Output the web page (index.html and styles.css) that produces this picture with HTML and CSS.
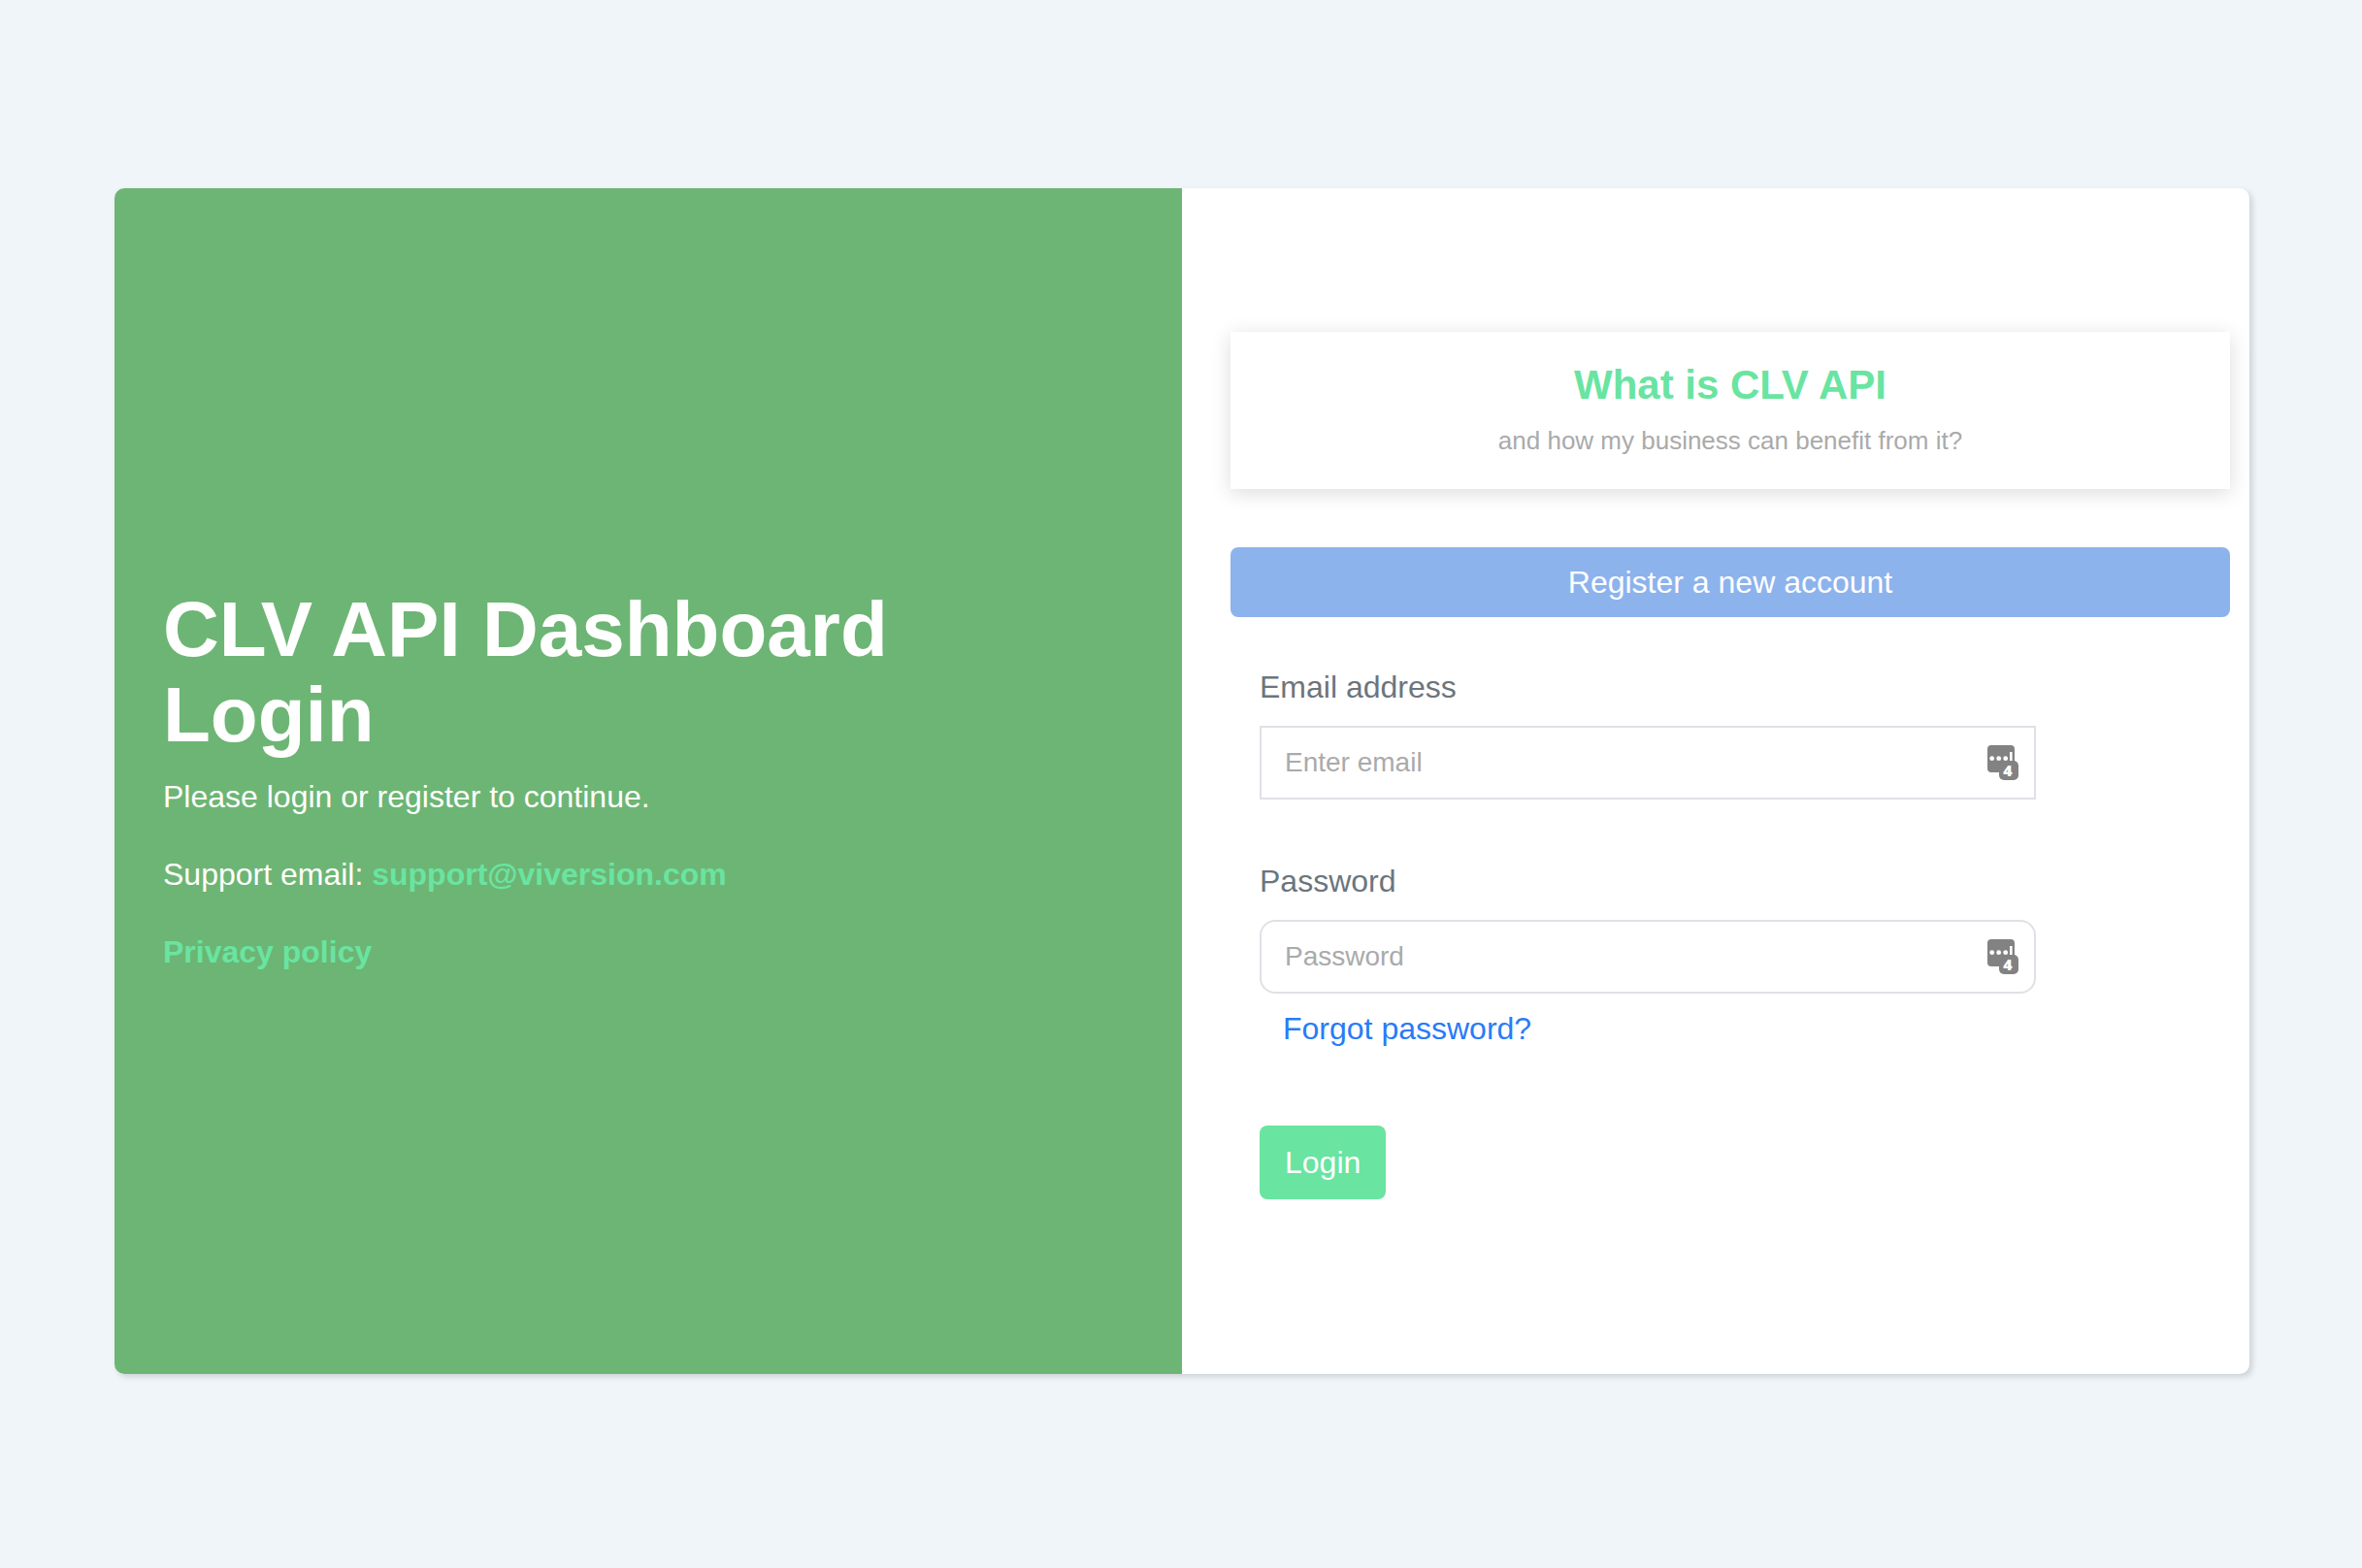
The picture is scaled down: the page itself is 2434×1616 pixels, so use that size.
FILE: index.html
```html
<!DOCTYPE html>
<html lang="en">
<head>
    <meta charset="UTF-8">
    <meta name="viewport" content="width=device-width, initial-scale=1">
    <title>CLV API Dashboard Login</title>
    <link rel="stylesheet" href="styles.css">
</head>
<body>
<div class="card">
    <div class="intro">
        <h1>CLV API Dashboard Login</h1>
        <p>Please login or register to continue.</p>
        <p>Support email: <a href="mailto:support@viversion.com">support@viversion.com</a></p>
        <p><a href="#">Privacy policy</a></p>
    </div>
    <div class="panel">
        <a class="about" href="#">
            <h2>What is CLV API</h2>
            <span>and how my business can benefit from it?</span>
        </a>
        <button class="register" type="button">Register a new account</button>
        <form class="loginForm">
            <label for="email">Email address</label>
            <div class="field">
                <input type="email" id="email" class="square" placeholder="Enter email">
                <svg class="keyIcon" viewBox="0 0 32 36">
                    <rect width="28" height="28" rx="4"/>
                    <rect x="12" y="16" width="20" height="20" rx="5"/>
                    <g class="light">
                        <circle cx="4.7" cy="13.7" r="2.4"/>
                        <circle cx="11.7" cy="13.7" r="2.4"/>
                        <circle cx="18.7" cy="13.7" r="2.4"/>
                        <rect x="23" y="7" width="2.6" height="9"/>
                        <text x="21" y="32" text-anchor="middle">4</text>
                    </g>
                </svg>
            </div>
            <label for="password">Password</label>
            <div class="field">
                <input type="password" id="password" placeholder="Password">
                <svg class="keyIcon" viewBox="0 0 32 36">
                    <rect width="28" height="28" rx="4"/>
                    <rect x="12" y="16" width="20" height="20" rx="5"/>
                    <g class="light">
                        <circle cx="4.7" cy="13.7" r="2.4"/>
                        <circle cx="11.7" cy="13.7" r="2.4"/>
                        <circle cx="18.7" cy="13.7" r="2.4"/>
                        <rect x="23" y="7" width="2.6" height="9"/>
                        <text x="21" y="32" text-anchor="middle">4</text>
                    </g>
                </svg>
            </div>
            <a class="forgot" href="#">Forgot password?</a>
            <button class="login" type="submit">Login</button>
        </form>
    </div>
</div>
</body>
</html>
```
FILE: styles.css
```css
*{
    box-sizing: border-box;
}
body{
    margin:0;
    padding:194px 116px 200px 118px;
    background: #eff5f9;
    font:32px/48px "Helvetica Neue", "Liberation Sans", Arial, sans-serif;
}
h1, h2, p{
    margin:0;
}
a{
    text-decoration: none;
}
button, input{
    font-family: inherit;
}
.card{
    display: grid;
    grid-template-columns: 1fr 1fr;
    min-height: calc(100vh - 394px);
    background: #fff;
    border-radius: 10px;
    box-shadow: 3px 3px 6px rgba(0,0,0,.15);
}
.intro, .panel{
    display: flex;
    flex-direction: column;
    justify-content: center;
}

/* left side */
.intro{
    gap: 32px;
    padding:0 50px;
    background: #6db574;
    border-radius: 10px 0 0 10px;
    color: #fff;
}
.intro h1{
    max-width: 800px;
    margin-bottom: -16px;
    font-size: 80px;
    line-height: 88px;
}
.intro a{
    color: #69e4a1;
    font-weight: bold;
}

/* right side */
.panel{
    padding:0 20px 32px 50px;
}
.about{
    padding:30px 20px;
    text-align: center;
    box-shadow: 0 4px 20px rgba(0,0,0,.14);
    color: #aaa;
    font-size: 26px;
    line-height: 39px;
}
.about h2{
    margin-bottom: 13px;
    color: #69e4a1;
    font-size: 42px;
    line-height: 50px;
}
.register{
    height: 72px;
    margin-top: 60px;
    border:0;
    border-radius: 8px;
    background: #8db3ed;
    color: #fff;
    font-size: 32px;
    cursor: pointer;
}
.loginForm{
    display: flex;
    flex-direction: column;
    align-items: flex-start;
    margin-top: 48px;
    padding-left: 30px;
}
.loginForm label{
    margin-bottom: 16px;
    color: #6c757d;
}
.field{
    position: relative;
    width: 80%;
}
.field + label{
    margin-top: 60px;
}
.field input{
    display: block;
    width: 100%;
    height: 76px;
    padding:0 64px 0 24px;
    border:2px solid #dee2e6;
    border-radius: 16px;
    background: #fff;
    font-size: 28px;
}
.field input.square{
    border-radius: 0;
}
.field input::placeholder{
    color: #aaa;
    opacity: 1;
}
/* password manager badge, sits over the input */
.keyIcon{
    position: absolute;
    top: 20px;
    right: 18px;
    width: 32px;
    height: 36px;
    overflow: visible;
    fill: #828282;
}
.keyIcon .light{
    fill: #fff;
}
.keyIcon text{
    font:800 16px "Open Sans", sans-serif;
}
.forgot{
    margin:12px 0 0 24px;
    color: #297bf8;
}
.login{
    height: 76px;
    margin-top: 76px;
    padding:0 26px;
    border:0;
    border-radius: 8px;
    background: #69e4a1;
    color: #fff;
    font-size: 32px;
    cursor: pointer;
}
```
